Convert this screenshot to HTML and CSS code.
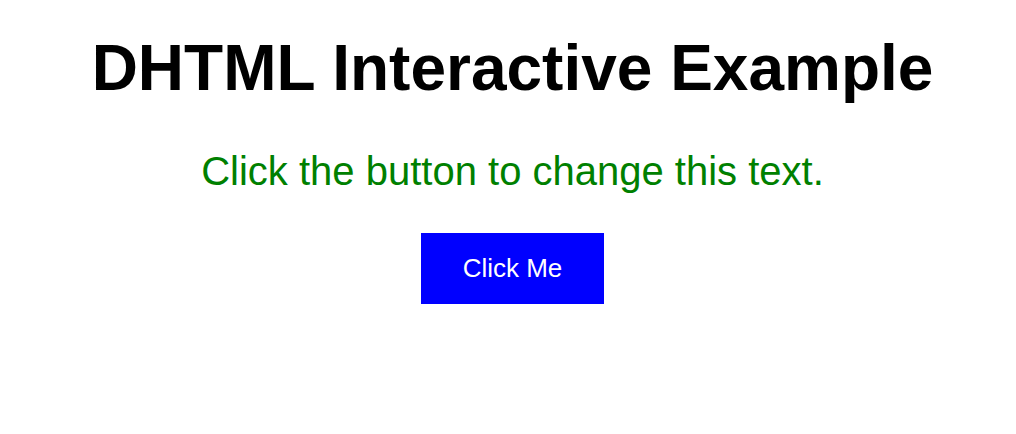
FILE: index.html
```html
<!DOCTYPE html>
<html lang="en">
<head>
    <meta charset="UTF-8">
    <meta name="viewport" content="width=device-width, initial-scale=1.0">
    <title>DHTML Interactive Example</title>
    <link rel="stylesheet" href="styles.css">
</head>
<body>
    <h1>DHTML Interactive Example</h1>
    <p id="message">Click the button to change this text.</p>
    <button id="changeBtn" onclick="changeText()">Click Me</button>

    <script>
        function changeText() {
            const message = document.getElementById("message");
            message.textContent = "The text has been changed!";
            message.style.color = "#d00000";
        }
    </script>
</body>
</html>
```

FILE: styles.css
```css
body {
    display: flex;
    flex-direction: column;
    align-items: center;
    margin: 0;
    padding: 31px 0 0 9px;
    background-color: #ffffff;
    font-family: "Liberation Sans", Arial, sans-serif;
    text-align: center;
}
h1 {
    margin: 0;
    font-size: 64px;
    font-weight: bold;
    color: #000000;
}
#message {
    margin: 44px 0 0;
    font-size: 40px;
    color: #008000;
}
button {
    margin-top: 39px;
    width: 183px;
    height: 71px;
    border: none;
    background-color: #0000ff;
    color: white;
    cursor: pointer;
    font-family: "Liberation Sans", Arial, sans-serif;
    font-size: 26px;
}
```
